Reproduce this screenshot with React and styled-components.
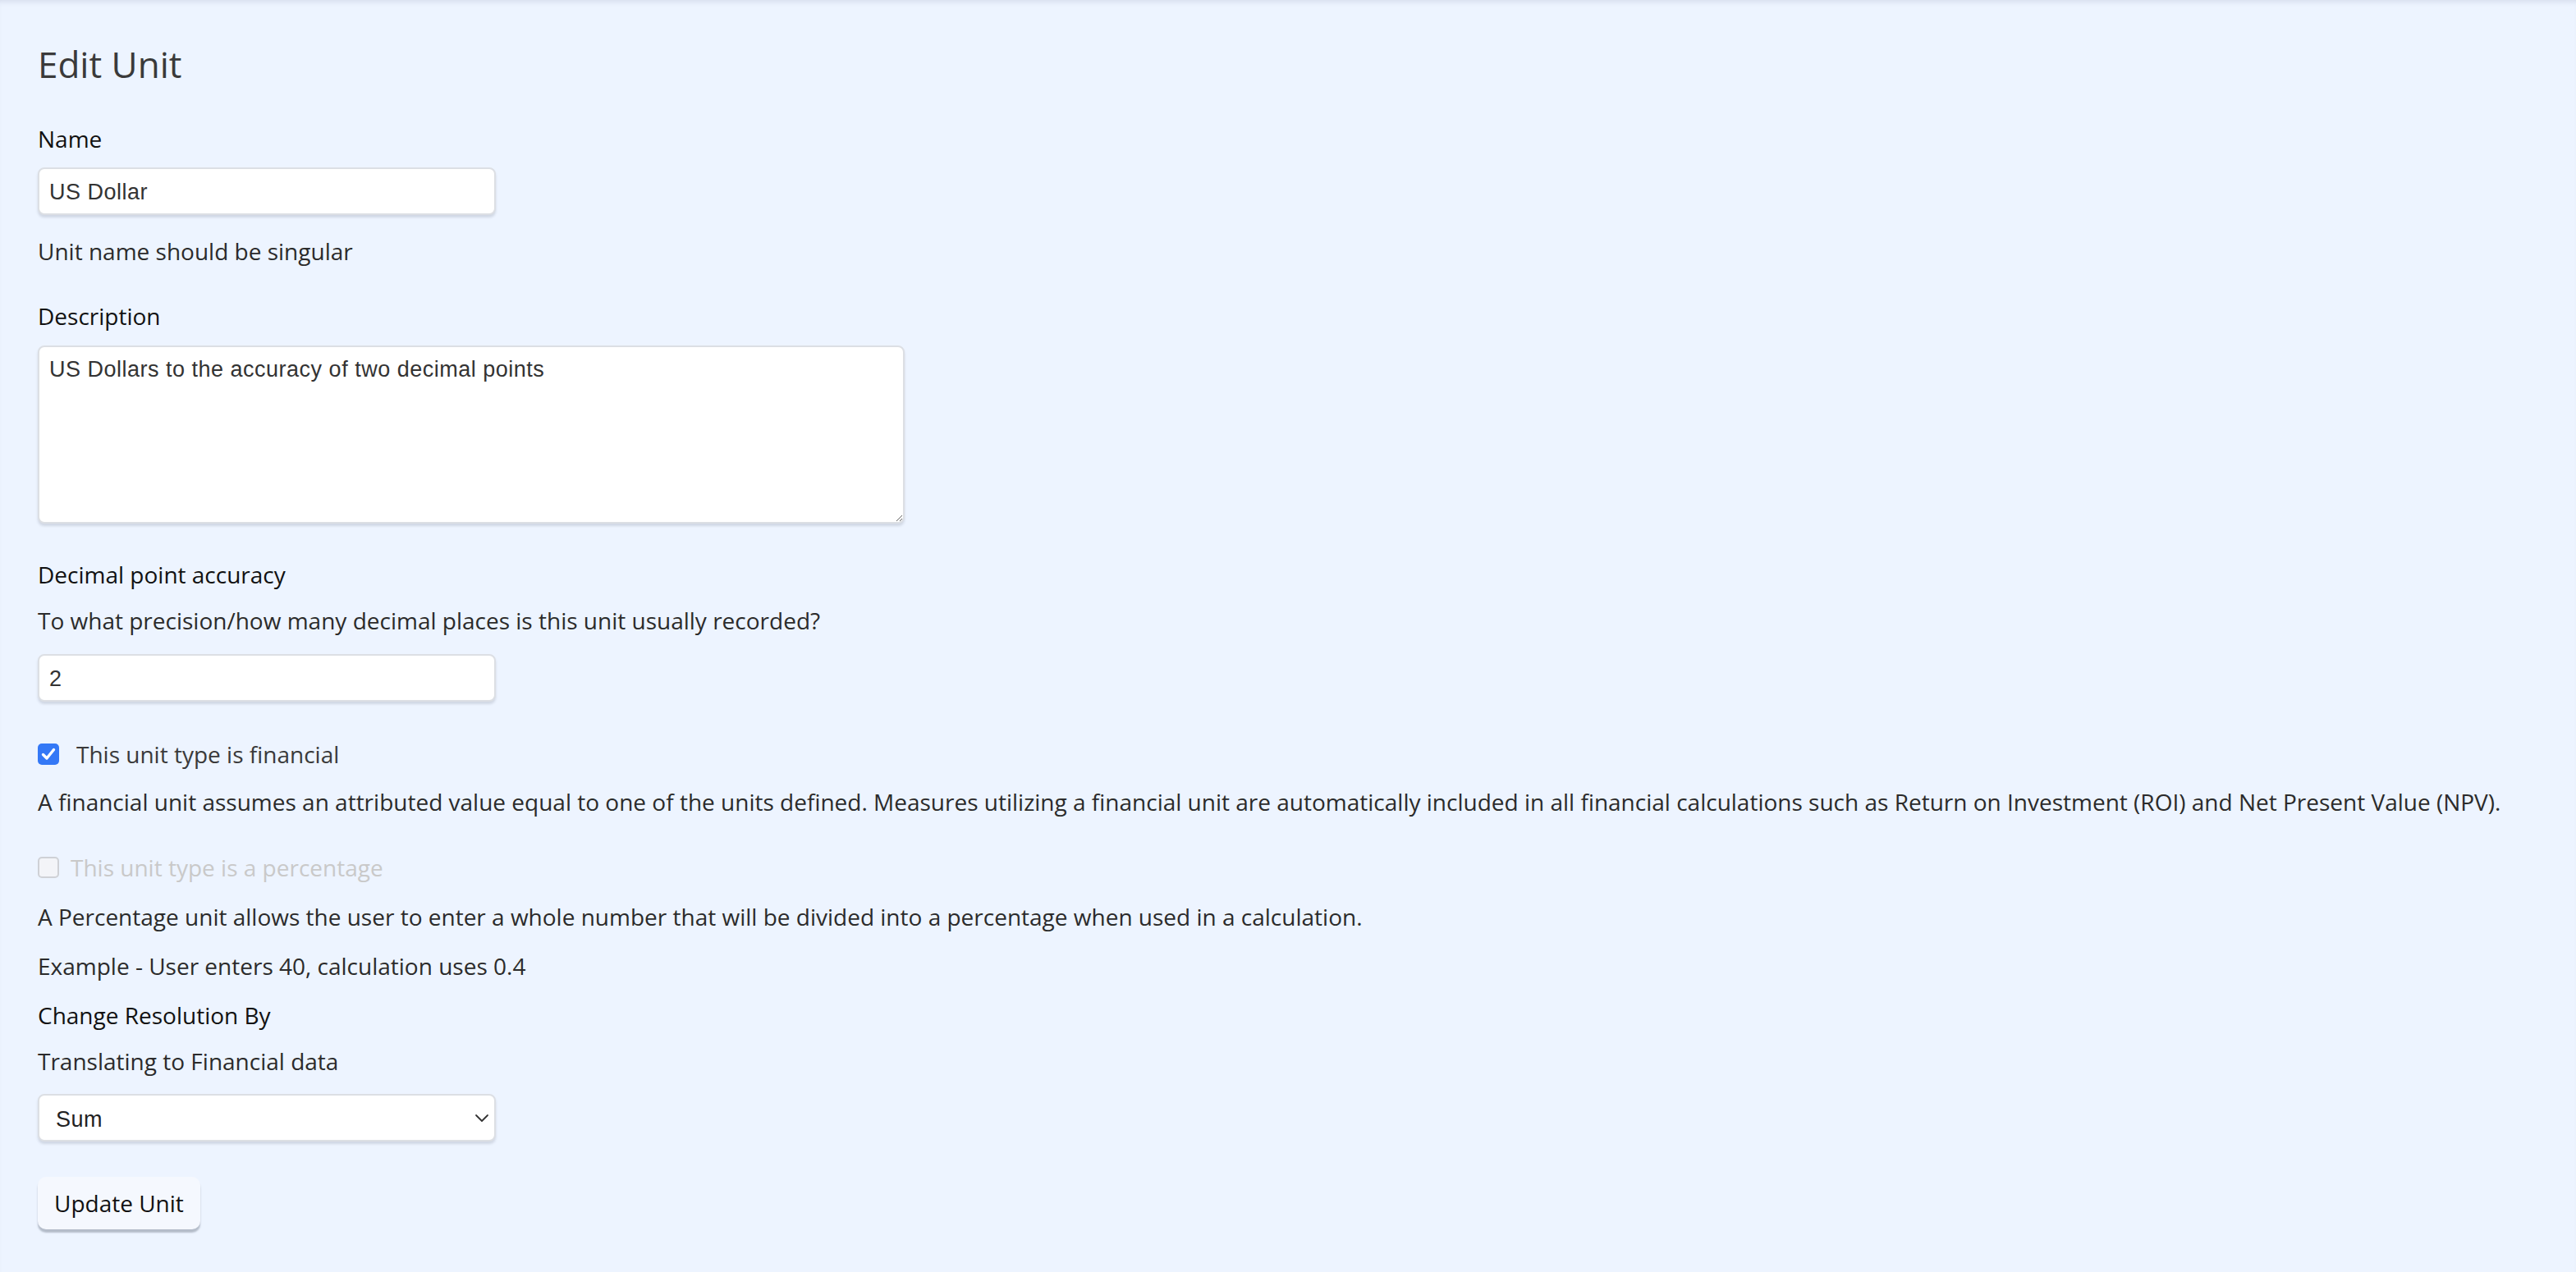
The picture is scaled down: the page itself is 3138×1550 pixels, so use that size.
import React, {useState} from 'react';
import styled, {createGlobalStyle} from 'styled-components';

const GlobalStyle = createGlobalStyle`
  html, body {
    margin: 0;
    padding: 0;
    background: #edf4ff;
  }
  body {
    font-family: "Open Sans", "Liberation Sans", sans-serif;
  }
`

const Page = styled.div`
  min-height: 1550px;
  box-sizing: border-box;
  padding: 48px 46px;
  background: #edf4ff;
  box-shadow: inset 0 6px 6px -4px rgba(40, 50, 90, 0.12);
`

const Form = styled.form`
  display: flex;
  flex-direction: column;
  align-items: flex-start;
`

const Title = styled.h2`
  margin: 0;
  font-size: 44px;
  line-height: 60px;
  font-weight: 400;
  color: #3a3a3a;
`

const Label = styled.label`
  display: block;
  margin-top: ${p => p.$top || 0}px;
  font-size: 28px;
  line-height: 42px;
  color: #111;
`

const Help = styled.p`
  margin: ${p => p.$top || 0}px 0 0;
  font-size: 28px;
  line-height: 42px;
  color: #2b2b2b;
  white-space: nowrap;
`

const field = `
  box-sizing: border-box;
  background: #fff;
  border: 2px solid #dcdfe4;
  border-radius: 8px;
  box-shadow: 0 3px 3px rgba(60, 70, 90, 0.16);
  font-family: "Liberation Sans", Arial, sans-serif;
  font-size: 27px;
  letter-spacing: 0.5px;
  color: #333;
  outline: none;
`

const TextInput = styled.input`
  ${field}
  margin-top: ${p => p.$top || 0}px;
  width: 558px;
  height: 58px;
  padding: 3px 12px 0;
`

const TextArea = styled.textarea`
  ${field}
  margin-top: 15px;
  width: 1056px;
  height: 217px;
  padding: 12px 12px 10px;
  line-height: 30px;
  resize: both;
`

const SelectWrap = styled.div`
  position: relative;
  margin-top: 19px;
  width: 558px;
`

const Select = styled.select`
  ${field}
  appearance: none;
  width: 558px;
  height: 58px;
  padding: 3px 20px 0;
  color: #222;
`

const Chevron = styled.svg`
  position: absolute;
  right: 8px;
  top: 22px;
  width: 18px;
  height: 14px;
  pointer-events: none;
`

const CheckRow = styled.label`
  display: flex;
  align-items: center;
  gap: ${p => p.$gap}px;
  margin-top: ${p => p.$top}px;
  font-size: 28px;
  line-height: 42px;
  color: ${p => (p.$disabled ? '#c9c9c9' : '#3a3a3a')};
`

const Box = styled.span`
  box-sizing: border-box;
  width: 26px;
  height: 26px;
  border-radius: 5px;
  display: flex;
  align-items: center;
  justify-content: center;
  background: ${p => (p.$checked ? '#3478f6' : '#f3f4f8')};
  border: ${p => (p.$checked ? 'none' : '2px solid #cfd1d6')};
`

const Button = styled.button`
  margin-top: 43px;
  padding: 0 20px;
  height: 64px;
  border: none;
  border-radius: 10px;
  background: #f5f8fe;
  box-shadow: 0 4px 2px rgba(110, 120, 135, 0.45);
  font-family: "Open Sans", sans-serif;
  font-size: 28px;
  color: #111;
  cursor: pointer;
`

const Checkbox = ({checked, disabled, gap, top, children, onToggle}) => (
  <CheckRow $gap={gap} $top={top} $disabled={disabled} onClick={() => !disabled && onToggle && onToggle()}>
    <Box $checked={checked}>
      {checked && (
        <svg width="18" height="16" viewBox="0 0 18 16">
          <path d="M2.5 8.5 L7 13 L15.5 2.5" fill="none" stroke="#fff" strokeWidth="3.4" strokeLinecap="round" strokeLinejoin="round" />
        </svg>
      )}
    </Box>
    {children}
  </CheckRow>
)

const App = () => {
  const [name, setName] = useState('US Dollar');
  const [description, setDescription] = useState('US Dollars to the accuracy of two decimal points');
  const [accuracy, setAccuracy] = useState('2');
  const [financial, setFinancial] = useState(true);
  const [resolution, setResolution] = useState('sum');

  return (
    <Page>
      <GlobalStyle />
      <Form onSubmit={e => e.preventDefault()}>
        <Title>Edit Unit</Title>

        <Label $top={40}>Name</Label>
        <TextInput $top={14} value={name} onChange={e => setName(e.target.value)} />
        <Help $top={23}>Unit name should be singular</Help>

        <Label $top={37}>Description</Label>
        <TextArea value={description} onChange={e => setDescription(e.target.value)} />

        <Label $top={41}>Decimal point accuracy</Label>
        <Help $top={14}>To what precision/how many decimal places is this unit usually recorded?</Help>
        <TextInput $top={20} value={accuracy} onChange={e => setAccuracy(e.target.value)} />

        <Checkbox checked={financial} gap={21} top={43} onToggle={() => setFinancial(!financial)}>
          This unit type is financial
        </Checkbox>
        <Help $top={16}>
          A financial unit assumes an attributed value equal to one of the units defined. Measures utilizing a financial unit are automatically included in all financial calculations such as Return on Investment (ROI) and Net Present Value (NPV).
        </Help>

        <Checkbox disabled gap={14} top={38}>
          This unit type is a percentage
        </Checkbox>
        <Help $top={18}>A Percentage unit allows the user to enter a whole number that will be divided into a percentage when used in a calculation.</Help>
        <Help $top={18}>Example - User enters 40, calculation uses 0.4</Help>

        <Label $top={18}>Change Resolution By</Label>
        <Help $top={14}>Translating to Financial data</Help>
        <SelectWrap>
          <Select value={resolution} onChange={e => setResolution(e.target.value)}>
            <option value="sum">Sum</option>
            <option value="average">Average</option>
          </Select>
          <Chevron viewBox="0 0 18 14">
            <path d="M2 4 L9 11 L16 4" fill="none" stroke="#333" strokeWidth="1.8" strokeLinecap="round" strokeLinejoin="round" />
          </Chevron>
        </SelectWrap>

        <Button type="submit">Update Unit</Button>
      </Form>
    </Page>
  )
}

export default App;
